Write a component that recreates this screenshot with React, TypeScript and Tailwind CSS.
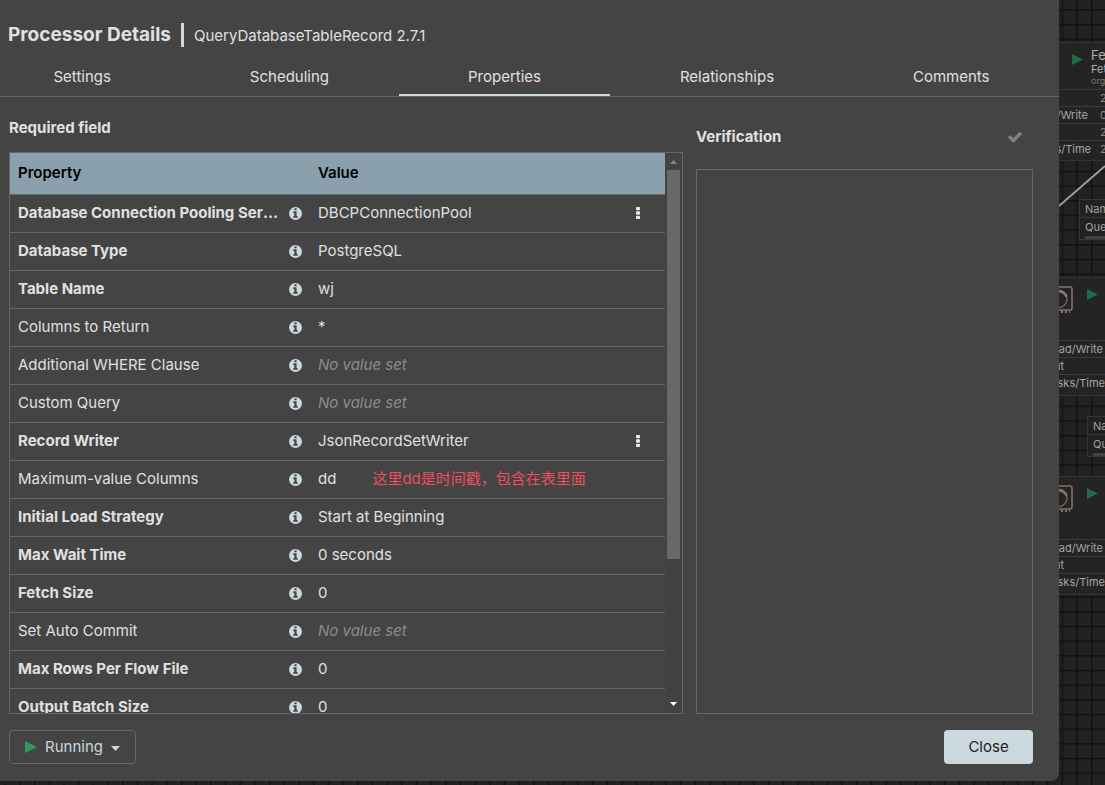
type Property = {
  name: string;
  value: string | null;
  required?: boolean;
  menu?: boolean;
  note?: string;
};

const properties: Property[] = [
  { name: "Database Connection Pooling Service", value: "DBCPConnectionPool", required: true, menu: true },
  { name: "Database Type", value: "PostgreSQL", required: true },
  { name: "Table Name", value: "wj", required: true },
  { name: "Columns to Return", value: "*" },
  { name: "Additional WHERE Clause", value: null },
  { name: "Custom Query", value: null },
  { name: "Record Writer", value: "JsonRecordSetWriter", required: true, menu: true },
  { name: "Maximum-value Columns", value: "dd", note: "这里dd是时间戳，包含在表里面" },
  { name: "Initial Load Strategy", value: "Start at Beginning", required: true },
  { name: "Max Wait Time", value: "0 seconds", required: true },
  { name: "Fetch Size", value: "0", required: true },
  { name: "Set Auto Commit", value: null },
  { name: "Max Rows Per Flow File", value: "0", required: true },
  { name: "Output Batch Size", value: "0", required: true },
];

const tabs = ["Settings", "Scheduling", "Properties", "Relationships", "Comments"];

function Play({ className }: { className: string }) {
  return (
    <svg viewBox="0 0 12 12" className={className} aria-hidden="true">
      <path d="M0 0 L12 6 L0 12 Z" fill="currentColor" />
    </svg>
  );
}

function InfoIcon() {
  return (
    <svg viewBox="0 128 1536 1536" className="size-[13px] shrink-0" aria-hidden="true">
      <circle cx="768" cy="896" r="768" fill="#cbd8dd" />
      <path
        fill="#444"
        d="M1024 1376v-160q0-14-9-23t-23-9h-96v-512q0-14-9-23t-23-9h-320q-14 0-23 9t-9 23v160q0 14 9 23t23 9h96v320h-96q-14 0-23 9t-9 23v160q0 14 9 23t23 9h448q14 0 23-9t9-23zm-128-896v-160q0-14-9-23t-23-9h-192q-14 0-23 9t-9 23v160q0 14 9 23t23 9h192q14 0 23-9t9-23z"
      />
    </svg>
  );
}

function CheckIcon() {
  return (
    <svg viewBox="0 0 1792 1792" className="size-4" fill="#808080" aria-hidden="true">
      <path d="M1671 566q0 40-28 68l-724 724-136 136q-28 28-68 28t-68-28l-136-136-362-362q-28-28-28-68t28-68l136-136q28-28 68-28t68 28l294 295 656-657q28-28 68-28t68 28l136 136q28 28 28 68z" />
    </svg>
  );
}

function ProcessorBadge() {
  return (
    <svg viewBox="0 0 28 28" className="absolute -left-3.5 top-2 size-7 text-[#85746d]" fill="none" stroke="currentColor" aria-hidden="true">
      <rect x="1" y="1" width="26" height="23" rx="2" strokeWidth="1.500" />
      <path d="M14 4.500a8.500 8.500 0 1 1-1 17" strokeWidth="1.200" />
      <path d="M13 5c4 0 7 2 8.500 5.500" strokeWidth="2.800" />
      <path d="M4 26h21" strokeWidth="2" strokeDasharray="2 2" />
    </svg>
  );
}

function CanvasRow({ label, width, count }: { label: string; width: string; count?: string }) {
  return (
    <div className="relative flex h-[17px] items-center border-t border-[#3a3a3a] text-[11px] leading-4 text-[#a5a5a5]">
      <span className={`flex justify-end whitespace-nowrap ${width}`}>{label}</span>
      {count && <span className="absolute left-[41px] text-[#8d8580]">{count}</span>}
    </div>
  );
}

function CanvasProcessor({ className }: { className: string }) {
  return (
    <div className={`absolute left-0 h-[119px] w-full border-y border-[#333] bg-[#242424] pt-[62px] ${className}`}>
      <ProcessorBadge />
      <Play className="absolute left-7 top-[11px] size-[11px] text-[#1f6c45]" />
      <CanvasRow label="Read/Write" width="w-11" />
      <CanvasRow label="Out" width="w-[5px]" />
      <CanvasRow label="Tasks/Time" width="w-[46px]" />
    </div>
  );
}

function ConnectionLabel({ className }: { className: string }) {
  return (
    <div className={`absolute w-24 border border-[#363636] bg-[#212121] text-[11px] leading-[18px] text-[#a0a0a0] ${className}`}>
      <div className="h-[18px] border-b border-[#363636] pl-[5px]">Name</div>
      <div className="pl-[5px]">Queued</div>
      <div className="ml-[5px] h-[3px] bg-[#424242]" />
    </div>
  );
}

function Canvas() {
  return (
    <div className="absolute inset-0 bg-[#222]">
      <svg className="absolute inset-0 size-full" aria-hidden="true">
        <defs>
          <pattern id="grid" x="4.600" y="9.200" width="14.680" height="14.680" patternUnits="userSpaceOnUse">
            <path d="M0.700 0V14.680M0 0.700H14.680" stroke="#0f1111" strokeWidth="1.400" />
          </pattern>
        </defs>
        <rect width="100%" height="100%" fill="url(#grid)" />
      </svg>
      <div className="absolute inset-y-0 right-0 w-[46px] overflow-hidden">
        <svg className="absolute left-0 top-[160px] h-12 w-[46px]" aria-hidden="true">
          <path d="M0 46 L46 6" stroke="#a0a0a0" strokeWidth="1.800" />
        </svg>
        <div className="absolute left-0 top-[42px] h-[119px] w-full border-y border-[#333] bg-[#242424]">
          <Play className="absolute left-[13px] top-[11px] size-[11px] text-[#1f6c45]" />
          <div className="h-[46px] whitespace-nowrap pl-8 pt-1 text-[#b0b0b0]">
            <div className="text-[13px] leading-4">Fetch</div>
            <div className="text-[11px] leading-3">Fetch</div>
            <div className="text-[9px] leading-3 text-[#777]">org</div>
          </div>
          <CanvasRow label="In" width="w-0" count="2" />
          <CanvasRow label="Read/Write" width="w-[29px]" count="0" />
          <CanvasRow label="Out" width="w-0" count="2" />
          <CanvasRow label="Tasks/Time" width="w-8" count="2" />
        </div>
        <ConnectionLabel className="left-5 top-[199px]" />
        <CanvasProcessor className="top-[277px]" />
        <ConnectionLabel className="left-7 top-[416px]" />
        <CanvasProcessor className="top-[476px]" />
      </div>
    </div>
  );
}

function PropertyRow({ property }: { property: Property }) {
  return (
    <tr className="h-[38px] border-b border-[#666]">
      <td className="p-0 pl-2">
        <div className="flex items-center justify-between gap-1 pr-2">
          <span className={property.required ? "truncate font-bold" : "truncate"}>{property.name}</span>
          <InfoIcon />
        </div>
      </td>
      <td className="p-0 pl-2">
        {property.value === null ? (
          <span className="italic text-[#8c8c8c]">No value set</span>
        ) : (
          <span>{property.value}</span>
        )}
        {property.note && (
          <span className="ml-9 text-[#f04d5d]">{property.note}</span>
        )}
      </td>
      <td className="p-0">
        {property.menu && (
          <button type="button" aria-label={`${property.name} actions`} className="mx-auto flex h-4 w-4 items-center justify-center">
            <svg viewBox="0 0 4 12" className="h-3 w-1" fill="#e8e8e8" aria-hidden="true">
              <rect width="4" height="3.300" rx="0.800" />
              <rect y="4.350" width="4" height="3.300" rx="0.800" />
              <rect y="8.700" width="4" height="3.300" rx="0.800" />
            </svg>
          </button>
        )}
      </td>
    </tr>
  );
}

function Scrollbar() {
  return (
    <div className="flex w-[17px] shrink-0 flex-col items-center bg-[#424242]" aria-hidden="true">
      <svg viewBox="0 0 17 17" className="size-[17px] shrink-0">
        <path d="M5 11h7L8.500 7z" fill="#858585" />
      </svg>
      <div className="flex min-h-0 w-[13px] flex-1 flex-col">
        <div className="h-[74%] bg-[#686868]" />
      </div>
      <svg viewBox="0 0 17 17" className="size-[17px] shrink-0">
        <path d="M5 6h7L8.500 10z" fill="#fff" />
      </svg>
    </div>
  );
}

export default function App() {
  return (
    <div className="relative h-screen overflow-hidden font-['Inter','Noto_Sans_CJK_SC',sans-serif] text-[15px] leading-5 text-[#e0e0e0]">
      <Canvas />
      <main className="relative h-full pb-1 pr-[46px]">
        <section className="flex h-full flex-col overflow-hidden rounded-br-lg bg-[#444]">
          <header className="flex h-[57px] shrink-0 items-center gap-[10px] pl-2 pt-3">
            <h1 className="text-[19px] font-bold leading-7">Processor Details</h1>
            <span className="h-6 w-[3px] bg-[#d8d8d8]" />
            <span className="pt-0.5">QueryDatabaseTableRecord 2.7.1</span>
          </header>
          <nav role="tablist" className="-ml-4 flex h-10 shrink-0 border-b border-[#666]">
            {tabs.map((tab) => (
              <button
                key={tab}
                type="button"
                role="tab"
                aria-selected={tab === "Properties"}
                className="flex-auto border-b-2 border-transparent pt-0.5 aria-selected:border-[#cbd8dd]"
              >
                {tab}
              </button>
            ))}
          </nav>
          <div className="grid min-h-0 flex-1 grid-cols-[2fr_1fr] grid-rows-[minmax(0,1fr)] gap-[13px] pl-[9px] pr-[26px]">
            <div className="flex min-w-0 flex-col">
              <h2 className="flex h-[55px] shrink-0 items-center pt-1.5 font-bold">Required field</h2>
              <div className="flex min-h-0 flex-1 border border-[#666]">
                <div className="min-w-0 flex-1 overflow-y-auto [scrollbar-width:none]">
                  <table className="w-full table-fixed border-collapse">
                    <colgroup>
                      <col className="w-[300px]" />
                      <col />
                      <col className="w-[54px]" />
                    </colgroup>
                    <thead>
                      <tr className="h-[41px] border-b border-[#666] bg-[#8aa1ad] text-left text-black">
                        <th className="p-0 pl-2 font-semibold">Property</th>
                        <th className="p-0 pl-2 font-semibold">Value</th>
                        <th className="p-0" aria-label="Actions" />
                      </tr>
                    </thead>
                    <tbody>
                      {properties.map((property) => (
                        <PropertyRow key={property.name} property={property} />
                      ))}
                    </tbody>
                  </table>
                </div>
                <Scrollbar />
              </div>
            </div>
            <div className="flex min-w-0 flex-col">
              <div className="flex h-[72px] shrink-0 items-center justify-between pr-[10px] pt-2">
                <h2 className="font-bold">Verification</h2>
                <button type="button" aria-label="Verify properties" disabled>
                  <CheckIcon />
                </button>
              </div>
              <div className="min-h-0 flex-1 border border-[#666]" />
            </div>
          </div>
          <footer className="flex shrink-0 justify-between pb-[17px] pl-[9px] pr-[26px] pt-4">
            <button type="button" className="flex h-[34px] items-center gap-2 rounded border border-[#666] px-[15px] text-[#cbd8dd]">
              <Play className="size-3 text-[#2f9a5d]" />
              Running
              <svg viewBox="0 0 9 5" className="mt-0.5 h-[5px] w-[9px]" aria-hidden="true">
                <path d="M0 0h9L4.500 5z" fill="currentColor" />
              </svg>
            </button>
            <button type="button" className="h-[34px] w-[89px] rounded bg-[#cbd8dd] text-[#222]">
              Close
            </button>
          </footer>
        </section>
      </main>
    </div>
  );
}
